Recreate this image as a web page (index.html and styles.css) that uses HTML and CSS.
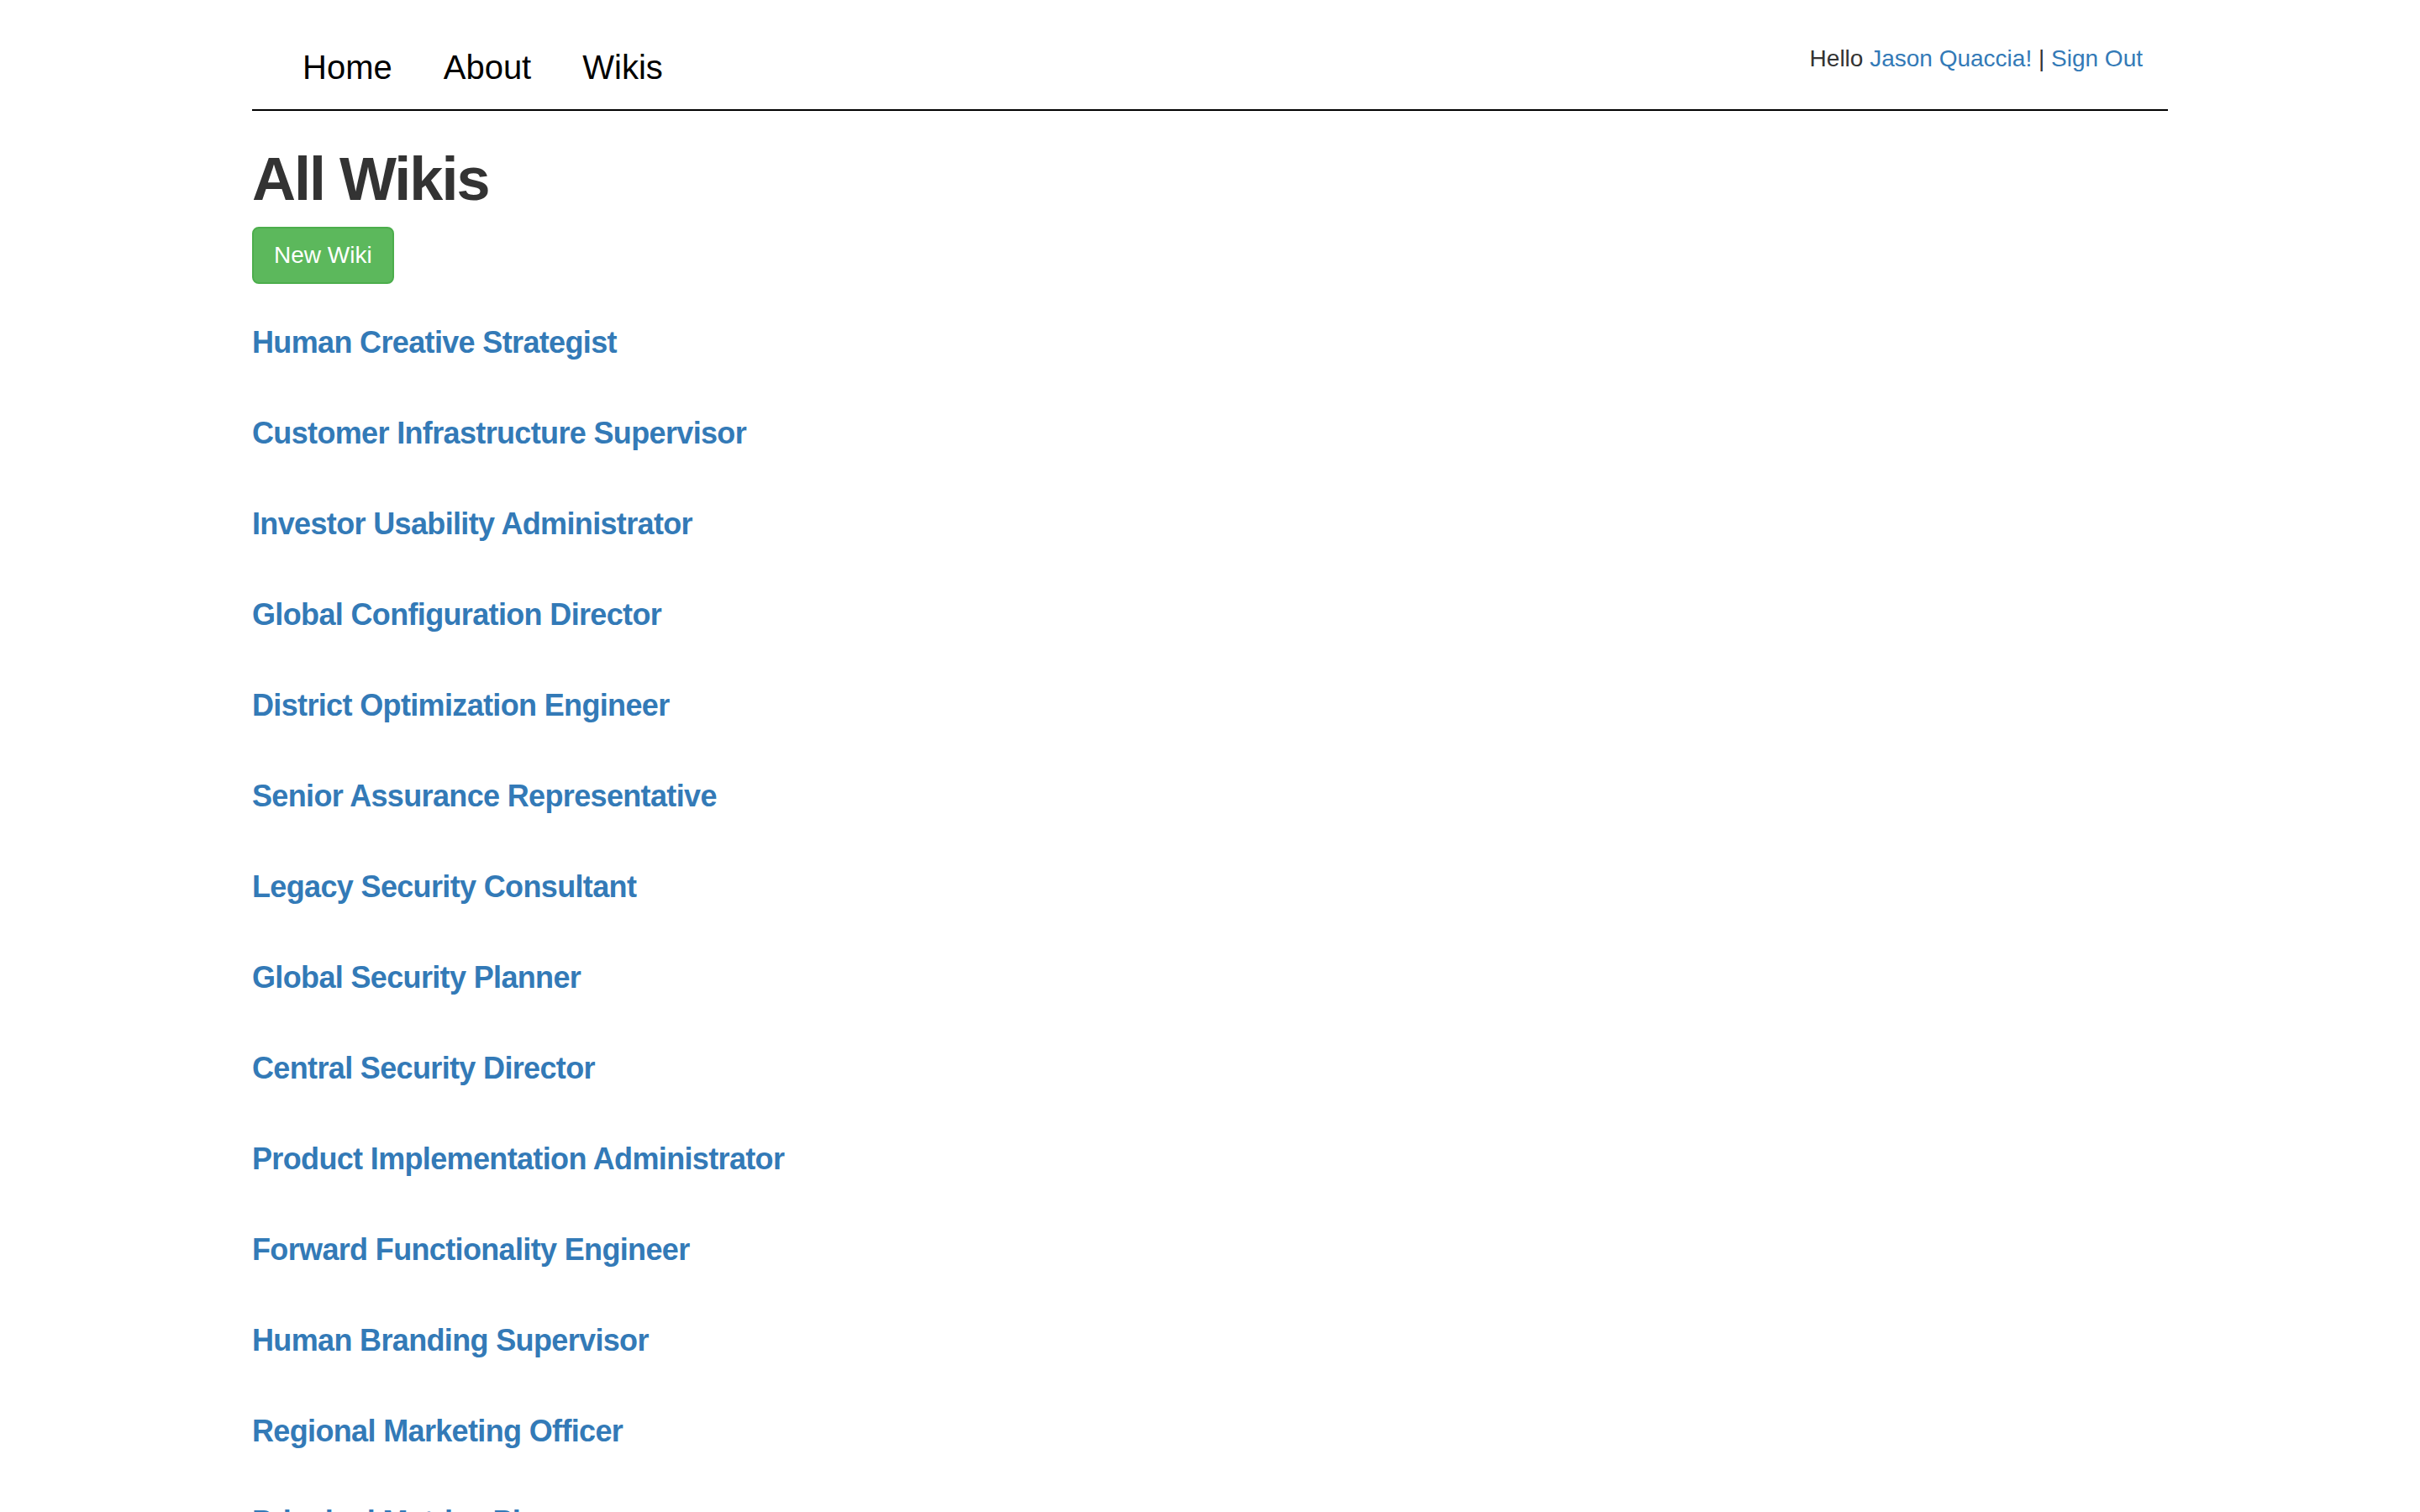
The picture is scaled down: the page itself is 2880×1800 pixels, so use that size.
FILE: index.html
```html
<!DOCTYPE html>
<html lang="en">
<head>
<meta charset="utf-8">
<title>All Wikis</title>
<link rel="stylesheet" href="styles.css">
</head>
<body>
<div class="container">
  <header class="site-header">
    <ul class="main-nav">
      <li><a href="#">Home</a></li>
      <li><a href="#">About</a></li>
      <li><a href="#">Wikis</a></li>
    </ul>
    <div class="user-info">Hello <a href="#">Jason Quaccia!</a> | <a href="#">Sign Out</a></div>
  </header>

  <h1 class="page-title">All Wikis</h1>
  <a href="#" class="btn-success">New Wiki</a>

  <ul class="wiki-list">
    <li><a href="#">Human Creative Strategist</a></li>
    <li><a href="#">Customer Infrastructure Supervisor</a></li>
    <li><a href="#">Investor Usability Administrator</a></li>
    <li><a href="#">Global Configuration Director</a></li>
    <li><a href="#">District Optimization Engineer</a></li>
    <li><a href="#">Senior Assurance Representative</a></li>
    <li><a href="#">Legacy Security Consultant</a></li>
    <li><a href="#">Global Security Planner</a></li>
    <li><a href="#">Central Security Director</a></li>
    <li><a href="#">Product Implementation Administrator</a></li>
    <li><a href="#">Forward Functionality Engineer</a></li>
    <li><a href="#">Human Branding Supervisor</a></li>
    <li><a href="#">Regional Marketing Officer</a></li>
    <li><a href="#">Principal Metrics Planner</a></li>
  </ul>
</div>
</body>
</html>
```

FILE: styles.css
```css
html, body {
  margin: 0;
  padding: 0;
  background: #fff;
}

body {
  font-family: "Liberation Sans", Arial, Helvetica, sans-serif;
  font-size: 28px;
  line-height: 40px;
  color: #333;
}

a {
  color: #337ab7;
  text-decoration: none;
}

.container {
  width: 2280px;
  margin: 0 auto;
}

.site-header {
  display: flex;
  justify-content: space-between;
  align-items: flex-start;
  padding-top: 30px;
  border-bottom: 2px solid #000;
}

.main-nav {
  display: flex;
  list-style: none;
  margin: 0 0 0 30px;
  padding: 0;
}

.main-nav a {
  display: block;
  padding: 30px 31px 30px 30px;
  font-size: 40px;
  line-height: 40px;
  color: #000;
}

.user-info {
  padding-top: 20px;
  padding-right: 30px;
  font-size: 28px;
  line-height: 40px;
  color: #333;
}

.page-title {
  margin: 41px 0 17px;
  font-size: 72px;
  line-height: 80px;
  font-weight: bold;
  letter-spacing: -2px;
  color: #333;
}

.btn-success {
  display: inline-block;
  padding: 12px 24px;
  font-size: 28px;
  line-height: 40px;
  color: #fff;
  background: #5cb85c;
  border: 2px solid #4cae4c;
  border-radius: 8px;
}

.wiki-list {
  list-style: none;
  margin: 50px 0 0;
  padding: 0;
  display: flex;
  flex-direction: column;
  align-items: flex-start;
  gap: 68px;
}

.wiki-list a {
  display: block;
  font-size: 36px;
  line-height: 40px;
  font-weight: bold;
  letter-spacing: -0.65px;
  color: #337ab7;
}
```
